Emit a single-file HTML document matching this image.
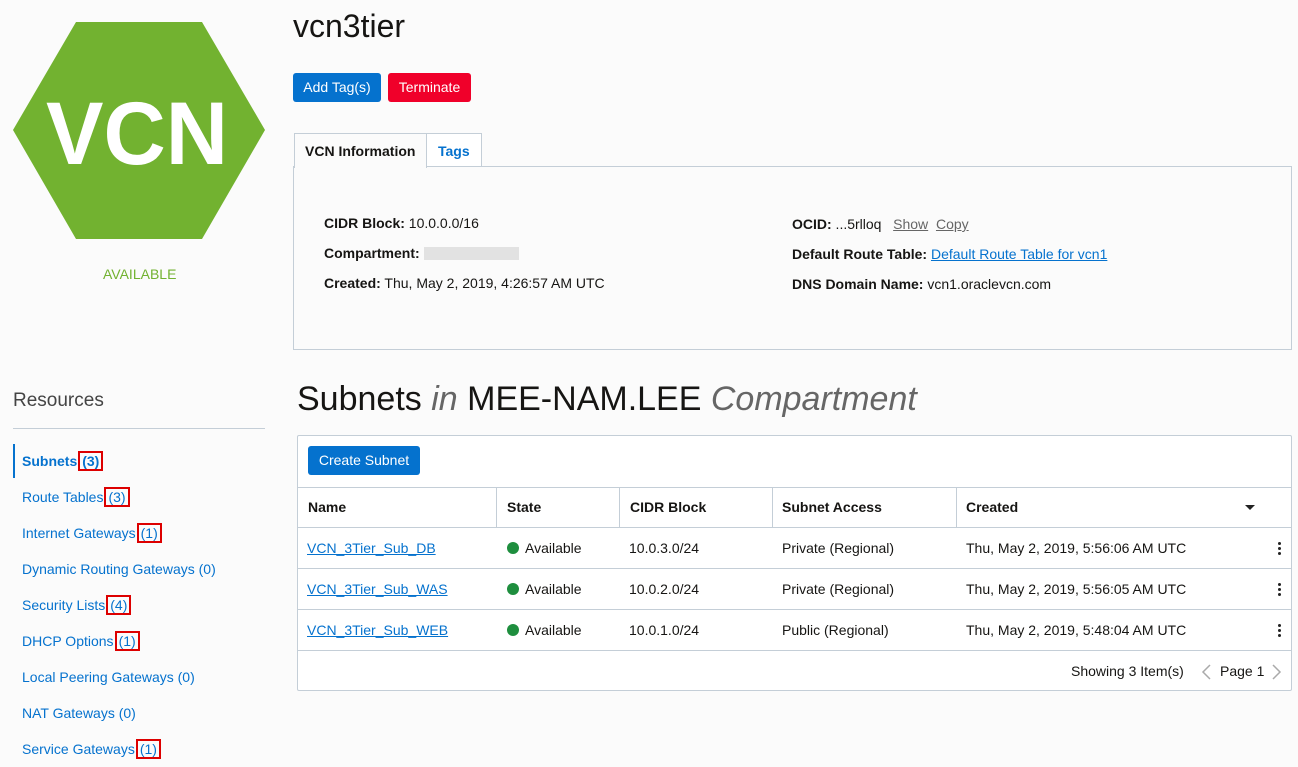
<!DOCTYPE html>
<html><head><style>
*{margin:0;padding:0;box-sizing:border-box}
body{width:1298px;height:767px;background:#fbfbfb;font-family:"Liberation Sans",sans-serif;color:#161513;position:relative;overflow:hidden;font-size:14px}
.a{position:absolute;white-space:nowrap}
.btn{position:absolute;color:#fff;border-radius:3px;font-size:14px;text-align:center;line-height:29px}
a,.lnk{color:#0572ce}
.nav{position:absolute;left:22px;color:#0572ce;font-size:14px}
.rb{border:2px solid #d00;padding:0 2px;margin-left:1px}
.td{position:absolute;font-size:14px}
.hline{position:absolute;left:298px;width:993px;height:1px;background:#c4ced7}
.vline{position:absolute;top:487px;height:40px;width:1px;background:#c4ced7}
.dot{display:inline-block;width:12px;height:12px;border-radius:50%;background:#1e8e3e;vertical-align:-1px;margin-right:6px}
.kb{position:absolute;left:1278px;width:3px}
.kb i{display:block;width:3px;height:3px;background:#222;border-radius:50%;margin-bottom:2px}
</style></head><body>
<svg class="a" style="left:0;top:0" width="290" height="290"><polygon points="76,22 202,22 265,130 202,239 76,239 13,130" fill="#72b230"/><text x="137" y="164" fill="#fff" font-family="Liberation Sans" font-weight="bold" font-size="89" text-anchor="middle" textLength="182" lengthAdjust="spacingAndGlyphs">VCN</text></svg>
<div class="a" style="left:103px;top:266px;color:#72b230;font-size:14px">AVAILABLE</div>

<div class="a" style="left:293px;top:8px;font-size:32px">vcn3tier</div>
<div class="btn" style="left:293px;top:73px;width:88px;background:#0572ce">Add Tag(s)</div>
<div class="btn" style="left:388px;top:73px;width:83px;background:#f0002a">Terminate</div>

<div class="a" style="left:293px;top:166px;width:999px;height:184px;border:1px solid #c4ced7;background:#fbfbfb"></div>
<div class="a" style="left:294px;top:133px;width:133px;height:35px;border:1px solid #c4ced7;border-bottom:none;background:#fbfbfb;font-weight:bold;padding:9px 0 0 10px">VCN Information</div>
<div class="a" style="left:427px;top:133px;width:55px;height:34px;border:1px solid #c4ced7;border-left:none;background:#fff;font-weight:bold;color:#0572ce;padding:9px 0 0 11px">Tags</div>
<div class="a" style="left:324px;top:215px"><b>CIDR Block:</b> 10.0.0.0/16</div>
<div class="a" style="left:324px;top:245px"><b>Compartment:</b> <span style="display:inline-block;width:95px;height:13px;background:#e2e2e2;vertical-align:-2px"></span></div>
<div class="a" style="left:324px;top:275px"><b>Created:</b> Thu, May 2, 2019, 4:26:57 AM UTC</div>
<div class="a" style="left:792px;top:216px"><b>OCID:</b> ...5rlloq &nbsp; <u style="color:#666">Show</u> &nbsp;<u style="color:#666">Copy</u></div>
<div class="a" style="left:792px;top:246px"><b>Default Route Table:</b> <u class="lnk">Default Route Table for vcn1</u></div>
<div class="a" style="left:792px;top:276px"><b>DNS Domain Name:</b> vcn1.oraclevcn.com</div>

<div class="a" style="left:13px;top:390px;font-size:19px;color:#444">Resources</div>
<div class="a" style="left:13px;top:428px;width:252px;height:1px;background:#c4ced7"></div>
<div class="a" style="left:13px;top:444px;width:2px;height:34px;background:#0572ce"></div>
<div class="nav" style="top:453px;font-weight:bold">Subnets<span class="rb">(3)</span></div>
<div class="nav" style="top:489px">Route Tables<span class="rb">(3)</span></div>
<div class="nav" style="top:525px">Internet Gateways<span class="rb">(1)</span></div>
<div class="nav" style="top:561px">Dynamic Routing Gateways (0)</div>
<div class="nav" style="top:597px">Security Lists<span class="rb">(4)</span></div>
<div class="nav" style="top:633px">DHCP Options<span class="rb">(1)</span></div>
<div class="nav" style="top:669px">Local Peering Gateways (0)</div>
<div class="nav" style="top:705px">NAT Gateways (0)</div>
<div class="nav" style="top:741px">Service Gateways<span class="rb">(1)</span></div>

<div class="a" style="left:297px;top:380px;font-size:34px;color:#161513">Subnets <i style="color:#666">in</i> MEE-NAM.LEE <i style="color:#666">Compartment</i></div>
<div class="a" style="left:297px;top:435px;width:995px;height:256px;border:1px solid #c4ced7;background:#fff;border-radius:2px"></div>
<div class="btn" style="left:308px;top:446px;width:112px;background:#0572ce">Create Subnet</div>
<div class="hline" style="top:487px"></div>
<div class="hline" style="top:527px"></div>
<div class="hline" style="top:568px"></div>
<div class="hline" style="top:609px"></div>
<div class="hline" style="top:650px"></div>
<div class="vline" style="left:496px"></div><div class="vline" style="left:619px"></div><div class="vline" style="left:772px"></div><div class="vline" style="left:956px"></div>
<div class="td" style="left:308px;top:499px;font-weight:bold">Name</div>
<div class="td" style="left:507px;top:499px;font-weight:bold">State</div>
<div class="td" style="left:630px;top:499px;font-weight:bold">CIDR Block</div>
<div class="td" style="left:782px;top:499px;font-weight:bold">Subnet Access</div>
<div class="td" style="left:966px;top:499px;font-weight:bold">Created</div>
<div class="a" style="left:1245px;top:505px;border-left:5px solid transparent;border-right:5px solid transparent;border-top:5px solid #222"></div>

<div class="td" style="left:307px;top:540px"><u class="lnk">VCN_3Tier_Sub_DB</u></div>
<div class="td" style="left:507px;top:540px"><span class="dot"></span>Available</div>
<div class="td" style="left:629px;top:540px">10.0.3.0/24</div>
<div class="td" style="left:782px;top:540px">Private (Regional)</div>
<div class="td" style="left:966px;top:540px">Thu, May 2, 2019, 5:56:06 AM UTC</div>
<div class="kb" style="top:542px"><i></i><i></i><i></i></div>

<div class="td" style="left:307px;top:581px"><u class="lnk">VCN_3Tier_Sub_WAS</u></div>
<div class="td" style="left:507px;top:581px"><span class="dot"></span>Available</div>
<div class="td" style="left:629px;top:581px">10.0.2.0/24</div>
<div class="td" style="left:782px;top:581px">Private (Regional)</div>
<div class="td" style="left:966px;top:581px">Thu, May 2, 2019, 5:56:05 AM UTC</div>
<div class="kb" style="top:583px"><i></i><i></i><i></i></div>

<div class="td" style="left:307px;top:622px"><u class="lnk">VCN_3Tier_Sub_WEB</u></div>
<div class="td" style="left:507px;top:622px"><span class="dot"></span>Available</div>
<div class="td" style="left:629px;top:622px">10.0.1.0/24</div>
<div class="td" style="left:782px;top:622px">Public (Regional)</div>
<div class="td" style="left:966px;top:622px">Thu, May 2, 2019, 5:48:04 AM UTC</div>
<div class="kb" style="top:624px"><i></i><i></i><i></i></div>

<div class="td" style="left:1071px;top:663px">Showing 3 Item(s)</div>
<svg class="a" style="left:1200px;top:663px" width="14" height="18"><polyline points="10,2 3,9 10,16" fill="none" stroke="#aaa" stroke-width="1.5"/></svg>
<div class="td" style="left:1220px;top:663px">Page 1</div>
<svg class="a" style="left:1270px;top:663px" width="14" height="18"><polyline points="3,2 10,9 3,16" fill="none" stroke="#aaa" stroke-width="1.5"/></svg>
</body></html>
